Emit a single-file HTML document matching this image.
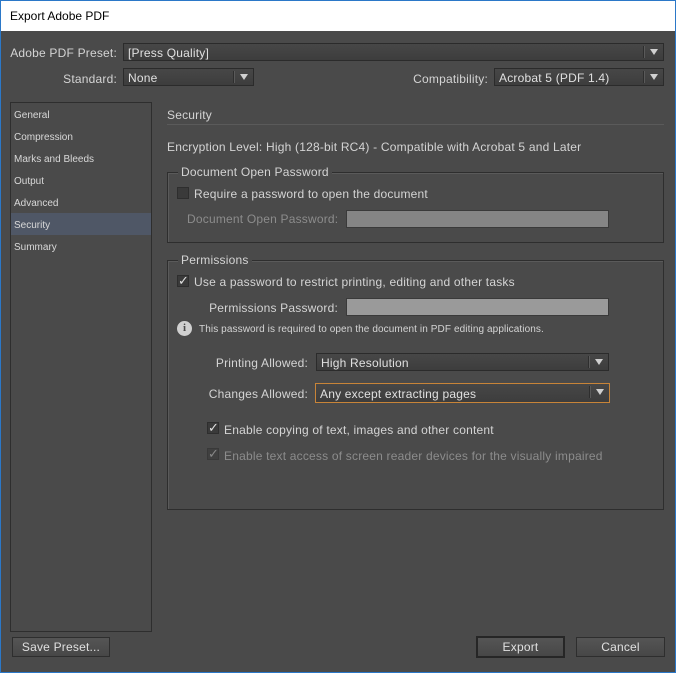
<!DOCTYPE html>
<html><head><style>
*{margin:0;padding:0;box-sizing:border-box}
body{width:676px;height:673px;background:#4a4a4a;font-family:"Liberation Sans",sans-serif;font-size:12px;letter-spacing:0.2px;color:#d4d4d4;position:relative;overflow:hidden}
.a{position:absolute;white-space:nowrap}
.win{position:absolute;left:0;top:0;width:676px;height:673px;border:1px solid #2b78c8;border-top:none}
.title{position:absolute;left:0;top:0;width:676px;height:31px;background:#fff;border:1px solid #2b78c8;border-bottom:none;color:#000;font-size:12px;letter-spacing:0;padding:8px 0 0 9px}
.dd{position:absolute;height:18px;border:1px solid #2b2b2b;background:linear-gradient(#474747,#3d3d3d);color:#e0e0e0;padding:2px 0 0 4px;line-height:15px}
.dd:after{content:"";position:absolute;right:5px;top:5px;border-left:4px solid transparent;border-right:4px solid transparent;border-top:6px solid #d0d0d0}
.dd:before{content:"";position:absolute;right:18px;top:2px;width:1px;height:12px;background:#2e2e2e;border-right:1px solid #5a5a5a}
.r{text-align:right}
.fs{position:absolute;border:1px solid #2e2e2e;box-shadow:1px 1px 0 #5a5a5a inset}
.lg{position:absolute;background:#4a4a4a;padding:0 3px}
.cb{position:absolute;width:12px;height:12px;background:#3a3a3a;border:1px solid #2e2e2e}
.ck{position:absolute;font-size:13px;line-height:12px;color:#e0e0e0}
.in{position:absolute;background:#8a8a8a;border:1px solid #3a3a3a}
.btn{position:absolute;height:20px;border:1px solid #2e2e2e;background:linear-gradient(#555,#474747);text-align:center;line-height:18px;color:#e0e0e0}
.side div{position:absolute;left:14px;font-size:10px;letter-spacing:0;color:#d8d8d8}
</style></head><body>
<div class="win"></div>
<div class="title">Export Adobe PDF</div>

<div class="a r" style="right:559px;top:46px">Adobe PDF Preset:</div>
<div class="dd" style="left:123px;top:43px;width:541px">[Press Quality]</div>
<div class="a r" style="right:559px;top:72px">Standard:</div>
<div class="dd" style="left:123px;top:68px;width:131px">None</div>
<div class="a r" style="right:188px;top:72px">Compatibility:</div>
<div class="dd" style="left:494px;top:68px;width:170px">Acrobat 5 (PDF 1.4)</div>

<div class="a" style="left:10px;top:102px;width:142px;height:530px;border:1px solid #2e2e2e"></div>
<div class="a" style="left:11px;top:213px;width:140px;height:22px;background:#4f5766"></div>
<div class="side">
<div style="top:110px">General</div>
<div style="top:132px">Compression</div>
<div style="top:154px">Marks and Bleeds</div>
<div style="top:176px">Output</div>
<div style="top:198px">Advanced</div>
<div style="top:220px">Security</div>
<div style="top:242px">Summary</div>
</div>

<div class="a" style="left:167px;top:108px;font-size:12px">Security</div>
<div class="a" style="left:167px;top:124px;width:497px;height:1px;background:#2e2e2e;border-bottom:1px solid #5a5a5a"></div>
<div class="a" style="left:167px;top:140px">Encryption Level: High (128-bit RC4) - Compatible with Acrobat 5 and Later</div>

<div class="fs" style="left:167px;top:172px;width:497px;height:71px"></div>
<div class="lg" style="left:178px;top:165px">Document Open Password</div>
<div class="cb" style="left:177px;top:187px"></div>
<div class="a" style="left:194px;top:187px">Require a password to open the document</div>
<div class="a" style="left:187px;top:212px;color:#8c8c8c">Document Open Password:</div>
<div class="in" style="left:346px;top:210px;width:263px;height:18px;background:#858585"></div>

<div class="fs" style="left:167px;top:260px;width:497px;height:250px"></div>
<div class="lg" style="left:178px;top:253px">Permissions</div>
<div class="cb" style="left:177px;top:275px"></div><div class="ck" style="left:178px;top:275px">✓</div>
<div class="a" style="left:194px;top:275px">Use a password to restrict printing, editing and other tasks</div>
<div class="a r" style="right:338px;top:301px">Permissions Password:</div>
<div class="in" style="left:346px;top:298px;width:263px;height:18px;background:#9a9a9a"></div>
<div class="a" style="left:177px;top:321px;width:15px;height:15px;border-radius:50%;background:#d0d0d0;color:#4a4a4a;font-weight:bold;font-size:11px;letter-spacing:0;text-align:center;line-height:15px;font-family:'Liberation Serif',serif">i</div>
<div class="a" style="left:199px;top:324px;font-size:10px;letter-spacing:0.1px">This password is required to open the document in PDF editing applications.</div>
<div class="a r" style="right:368px;top:356px">Printing Allowed:</div>
<div class="dd" style="left:316px;top:353px;width:293px">High Resolution</div>
<div class="a r" style="right:368px;top:387px">Changes Allowed:</div>
<div class="dd" style="left:315px;top:383px;width:295px;height:20px;border-color:#c88438;padding-top:3px">Any except extracting pages</div>
<div class="cb" style="left:207px;top:422px"></div><div class="ck" style="left:208px;top:422px">✓</div>
<div class="a" style="left:224px;top:423px">Enable copying of text, images and other content</div>
<div class="cb" style="left:207px;top:448px;opacity:.6"></div><div class="ck" style="left:208px;top:448px;color:#888">✓</div>
<div class="a" style="left:224px;top:449px;color:#8c8c8c">Enable text access of screen reader devices for the visually impaired</div>

<div class="btn" style="left:12px;top:637px;width:98px">Save Preset...</div>
<div class="btn" style="left:476px;top:636px;width:89px;height:22px;border:2px solid #262626">Export</div>
<div class="btn" style="left:576px;top:637px;width:89px">Cancel</div>
</body></html>
